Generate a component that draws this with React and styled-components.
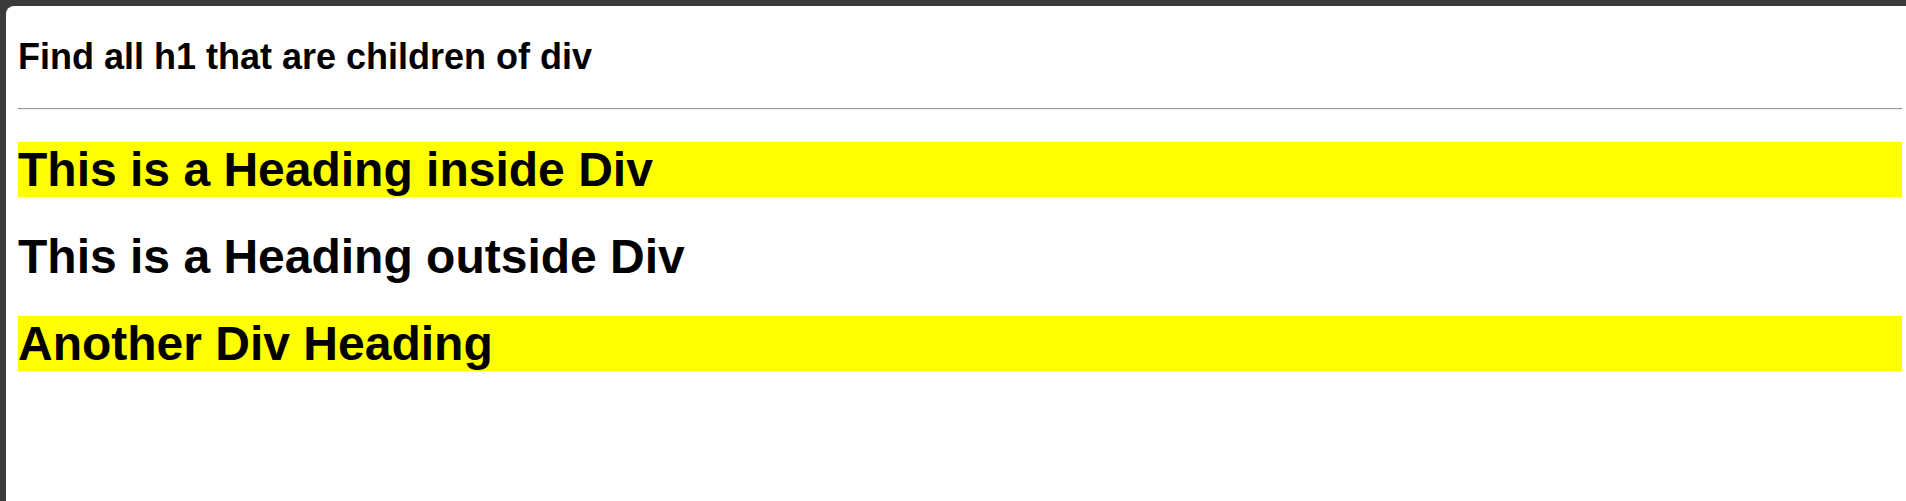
import React from "react";
import styled, { createGlobalStyle } from "styled-components";

const GlobalStyle = createGlobalStyle`
  html, body {
    margin: 0;
    height: 100%;
    background-color: #3a3a3a;
  }
  #root {
    height: 100%;
  }
`;

const Frame = styled.div`
  height: 100%;
  padding: 6px 0 0 6px;
  box-sizing: border-box;
`;

const Page = styled.div`
  display: flow-root;
  height: 100%;
  box-sizing: border-box;
  padding: 0 4px 0 12px;
  background-color: white;
  border-top-left-radius: 8px;
  font-family: "Liberation Sans", Arial, sans-serif;
  color: black;
`;

const Title = styled.h2`
  font-size: 36px;
  font-weight: bold;
  line-height: normal;
  margin: 30px 0;
`;

const Rule = styled.hr`
  height: 0;
  margin: 12px 0;
  border: none;
  border-top: 1px solid #9a9a9a;
  border-bottom: 1px solid #eeeeee;
`;

const Heading = styled.h1`
  font-size: 48px;
  font-weight: bold;
  line-height: normal;
  margin: 32px 0;
  background-color: ${(props) => (props.$inDiv ? "yellow" : "transparent")};
`;

const headings = [
  { text: "This is a Heading inside Div", inDiv: true },
  { text: "This is a Heading outside Div", inDiv: false },
  { text: "Another Div Heading", inDiv: true },
];

export default function App() {
  return (
    <>
      <GlobalStyle />
      <Frame>
        <Page>
          <Title>Find all h1 that are children of div</Title>
          <Rule />
          {headings.map((h) => (
            <Heading key={h.text} $inDiv={h.inDiv}>
              {h.text}
            </Heading>
          ))}
        </Page>
      </Frame>
    </>
  );
}
